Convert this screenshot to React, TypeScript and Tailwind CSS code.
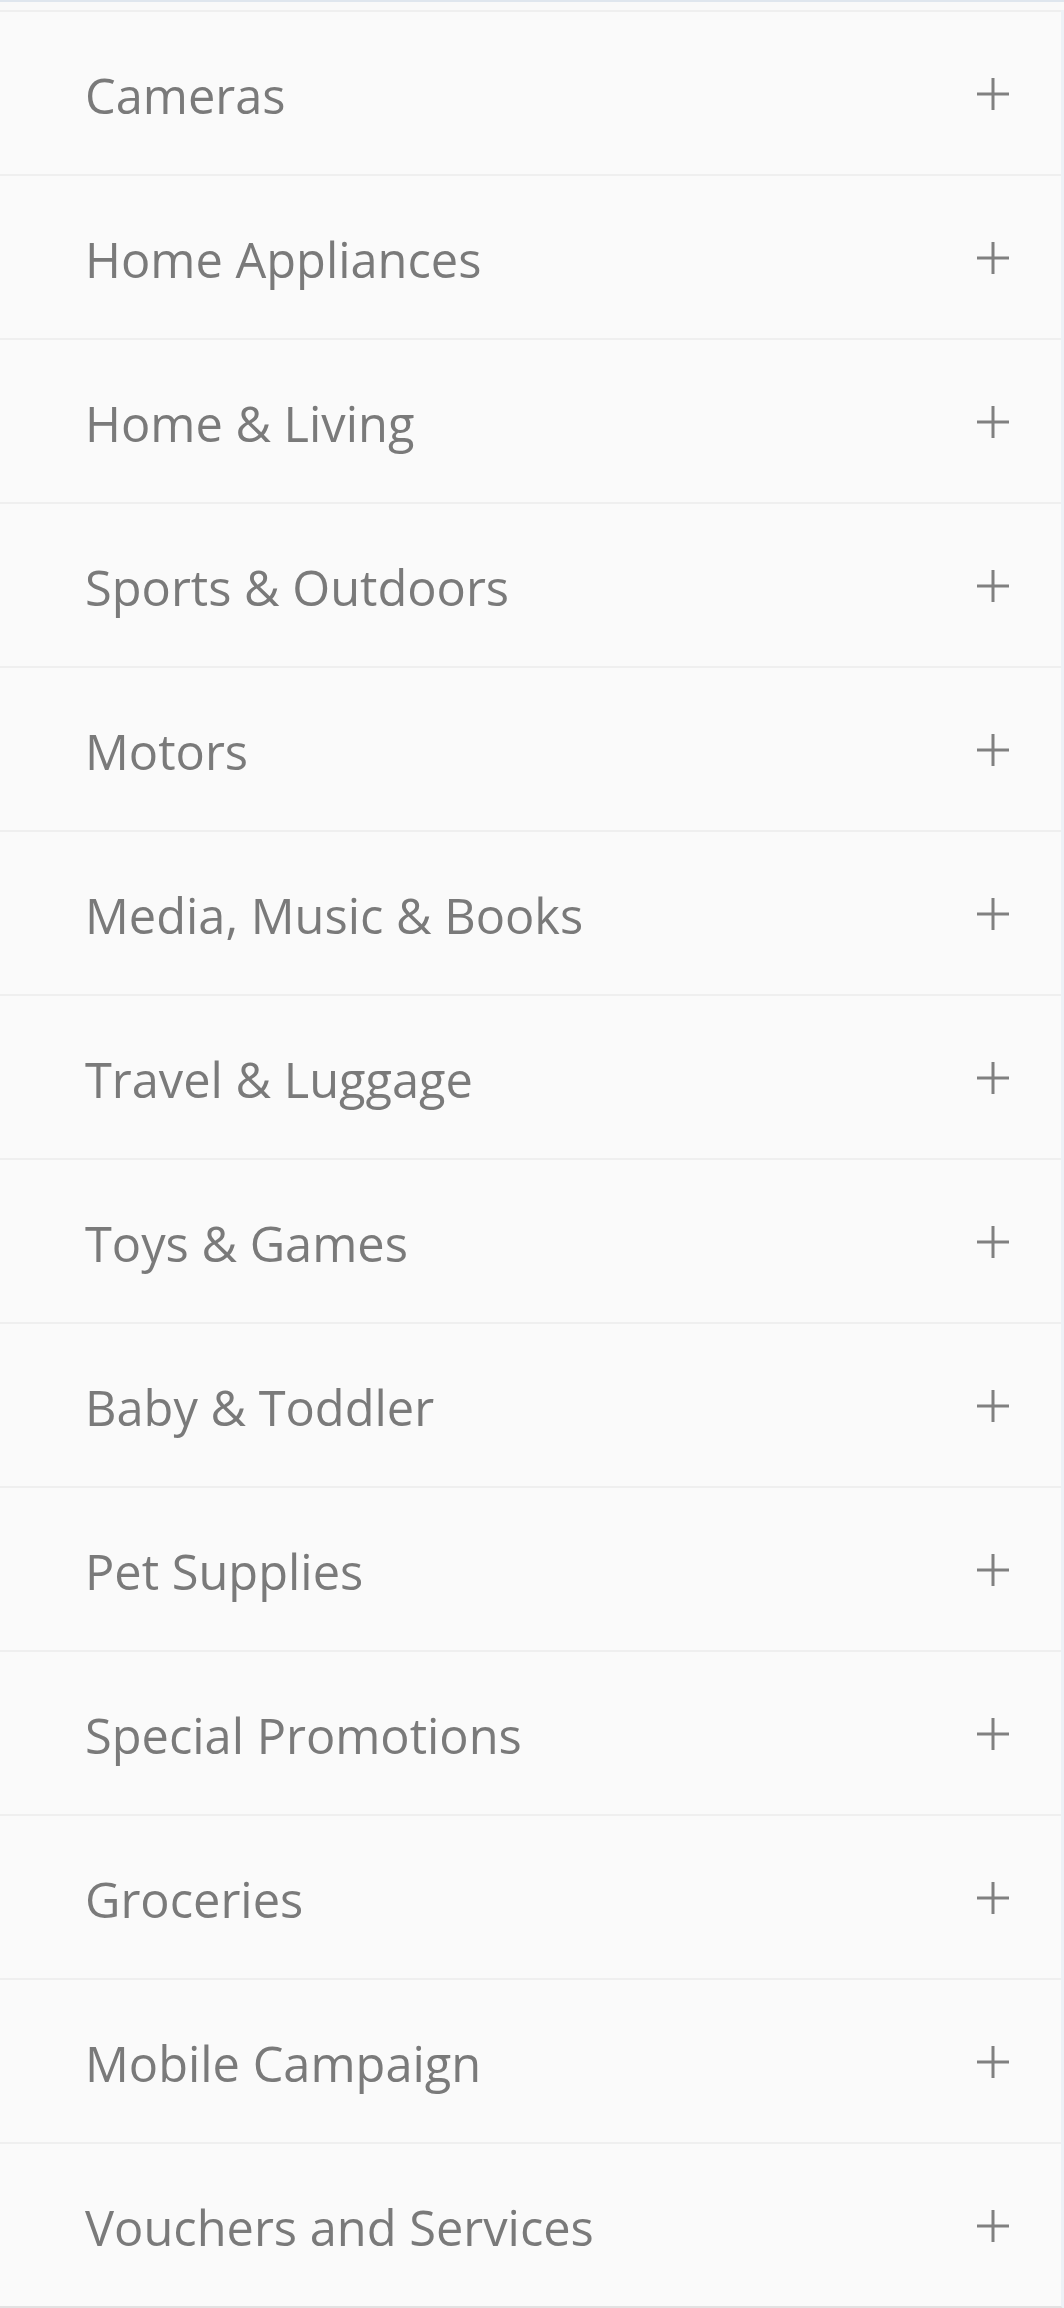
const categories = [
  "Cameras",
  "Home Appliances",
  "Home & Living",
  "Sports & Outdoors",
  "Motors",
  "Media, Music & Books",
  "Travel & Luggage",
  "Toys & Games",
  "Baby & Toddler",
  "Pet Supplies",
  "Special Promotions",
  "Groceries",
  "Mobile Campaign",
  "Vouchers and Services",
];

function PlusIcon() {
  return (
    <svg width="32" height="32" viewBox="0 0 32 32" aria-hidden="true">
      <path d="M16 0v32M0 16h32" stroke="#808080" strokeWidth="3" fill="none" />
    </svg>
  );
}

export default function App() {
  return (
    <div
      className="w-[1064px] min-h-[2308px] bg-[#f9f9f9] border-t-2 border-[#dfe6ee]"
      style={{ fontFamily: '"Open Sans", "Noto Sans", sans-serif' }}
    >
      <ul className="mt-[8px] border-r-[3px] border-b-4 border-r-[#edf1f6] border-b-[#e2e2e2] bg-[#fafafa]">
        {categories.map((name) => (
          <li
            key={name}
            className="flex h-[164px] items-center justify-between border-t-2 border-[#efefef] pl-[85px] pr-[52px]"
          >
            <span className="mt-[4px] text-[48.75px] leading-none text-[#7a7a7a]">{name}</span>
            {/* the toggle glyph sits a touch below the text's cap centre */}
            <span className="mt-[2px] flex">
              <PlusIcon />
            </span>
          </li>
        ))}
      </ul>
    </div>
  );
}
